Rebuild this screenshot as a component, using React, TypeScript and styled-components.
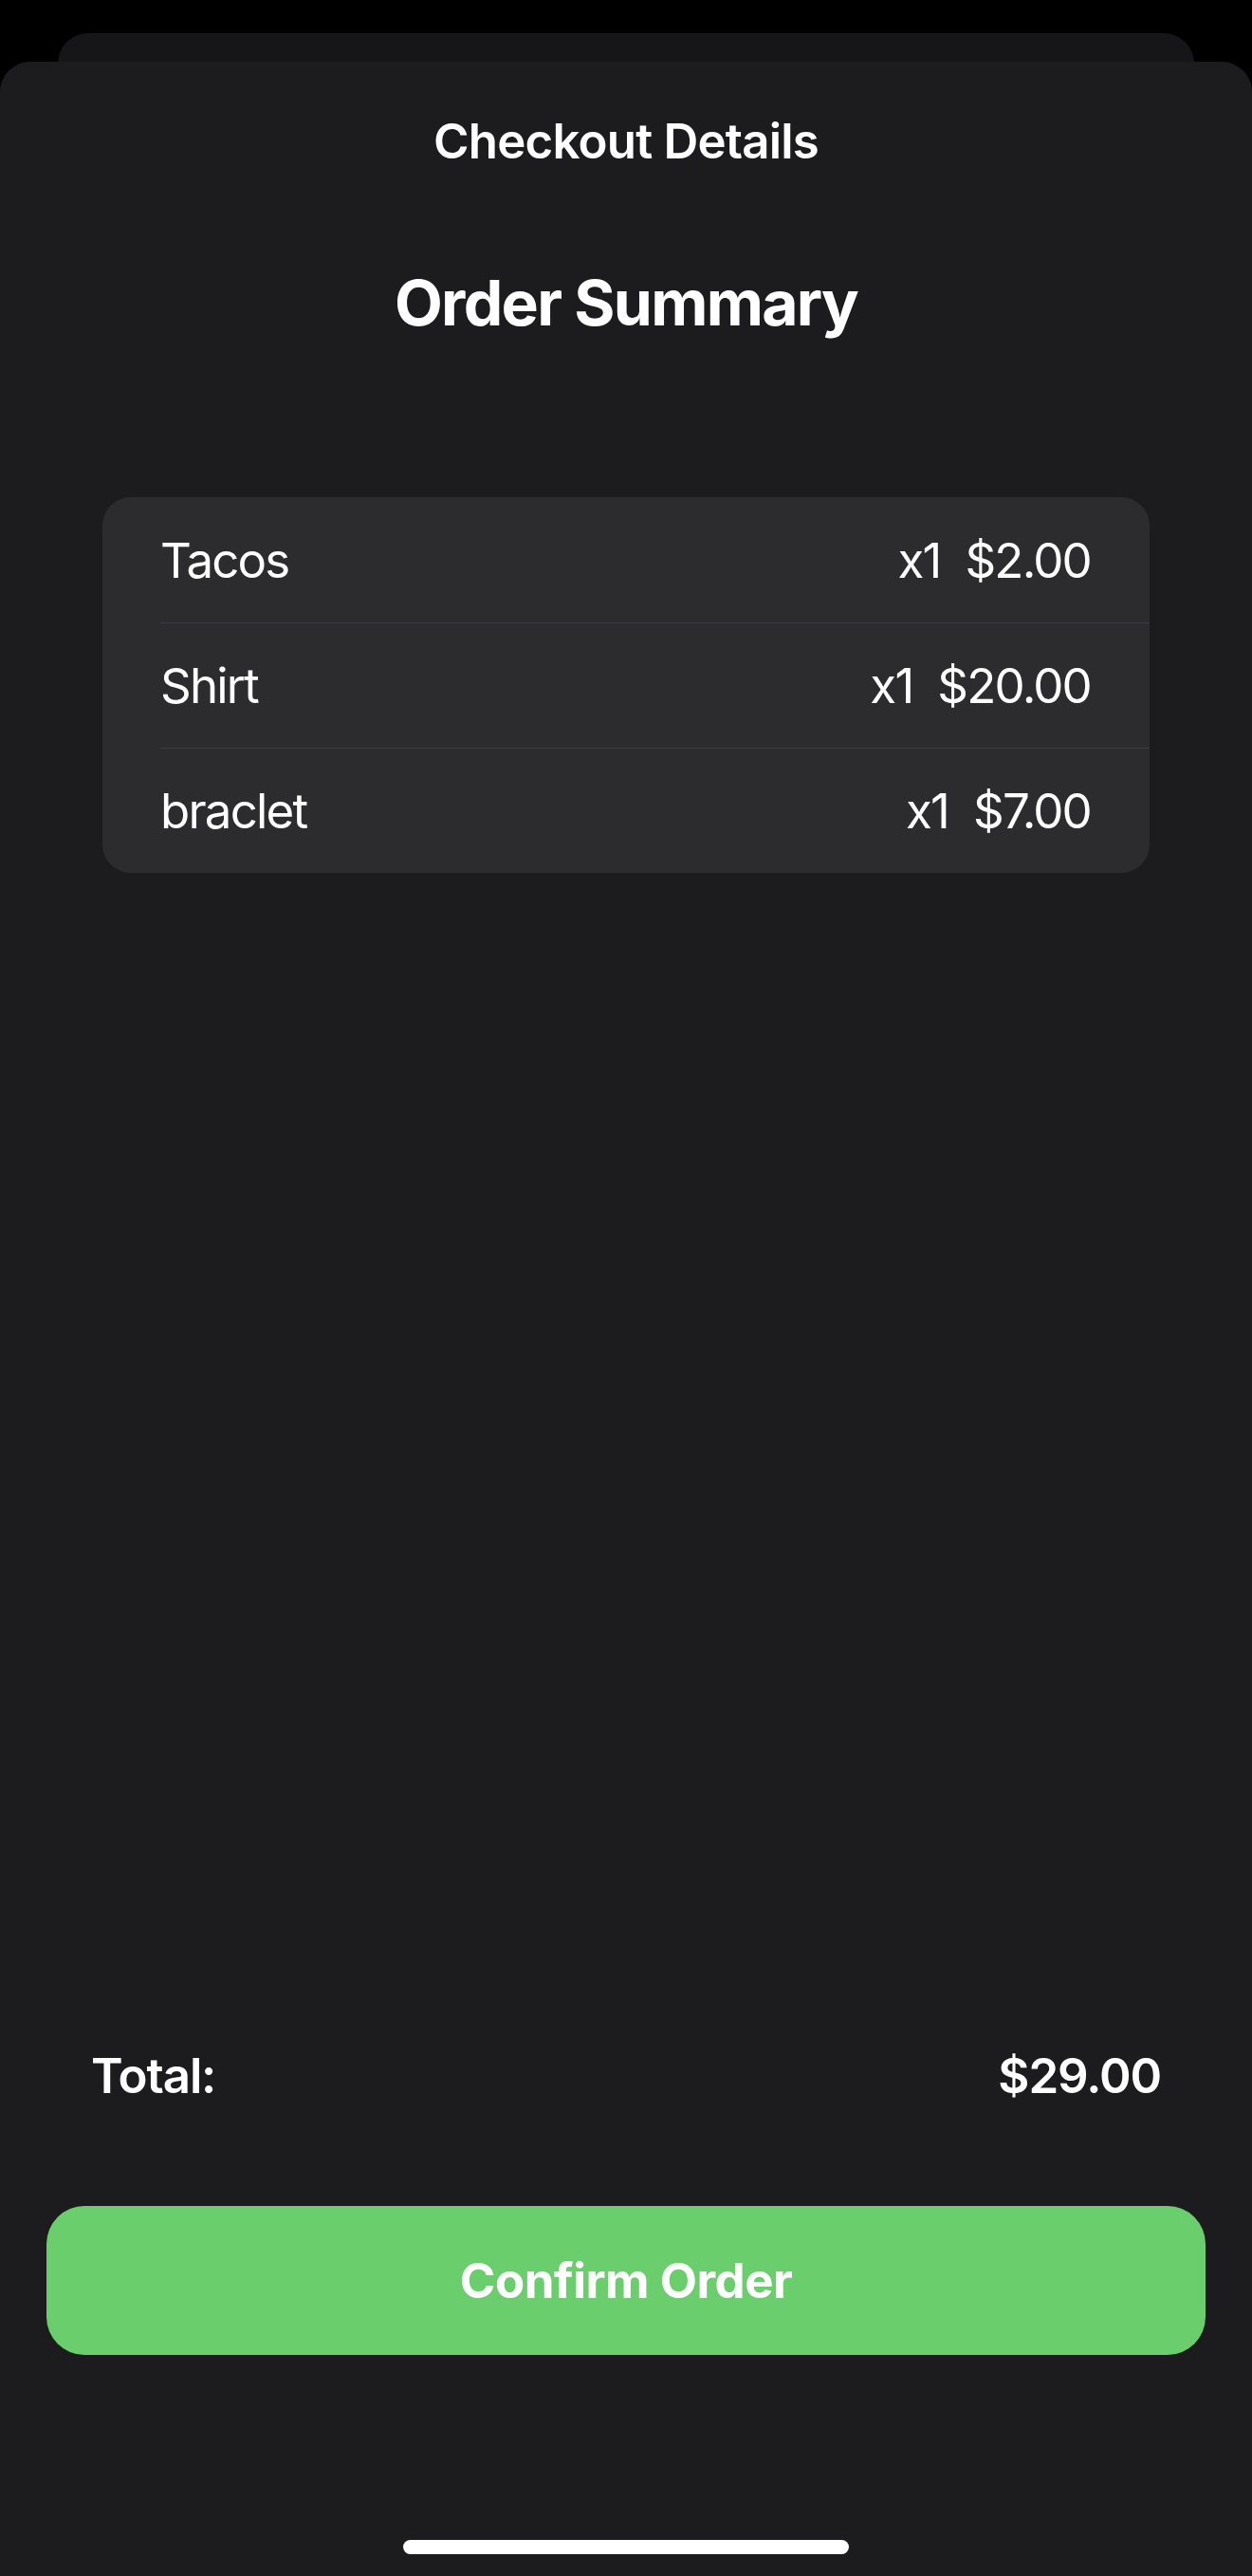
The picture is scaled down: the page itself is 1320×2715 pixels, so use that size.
import { createGlobalStyle } from "styled-components";
import styled from "styled-components";

type OrderItem = {
  name: string;
  qty: number;
  price: number;
};

const items: OrderItem[] = [
  { name: "Tacos", qty: 1, price: 2 },
  { name: "Shirt", qty: 1, price: 20 },
  { name: "braclet", qty: 1, price: 7 },
];

const money = (n: number) => `$${n.toFixed(2)}`;

const GlobalStyle = createGlobalStyle`
  html, body {
    margin: 0;
    padding: 0;
    background: #000;
  }
  body {
    font-family: Inter, "Noto Sans", "Liberation Sans", sans-serif;
    color: #fff;
    -webkit-font-smoothing: antialiased;
  }
  * {
    box-sizing: border-box;
  }
`;

const Screen = styled.div`
  width: 1320px;
  height: 2715px;
  padding-top: 35px;
  background: #000;
  display: flex;
  flex-direction: column;
  overflow: hidden;
`;

const BackSheet = styled.div`
  height: 60px;
  margin: 0 61px;
  border-radius: 32px 32px 0 0;
  background: #161618;
`;

const Sheet = styled.div`
  position: relative;
  flex: 1;
  margin-top: -30px;
  border-radius: 32px 32px 0 0;
  background: #1c1c1e;
  display: flex;
  flex-direction: column;
  padding-top: 53px;
  padding-bottom: 23px;
`;

const NavTitle = styled.h1`
  margin: 0;
  font-size: 51px;
  line-height: 1.2;
  font-weight: 600;
  letter-spacing: -0.8px;
  text-align: center;
`;

const Heading = styled.h2`
  margin: 101px 0 0;
  font-size: 66px;
  line-height: 1.2;
  font-weight: 700;
  letter-spacing: -1.7px;
  text-align: center;
`;

const ItemList = styled.div`
  margin: 165px 108px 0;
  border-radius: 30px;
  background: #2c2c2e;
  overflow: hidden;
`;

const ItemRow = styled.div<{ $first?: boolean }>`
  height: 132px;
  margin-left: 61px;
  padding-right: 62px;
  display: flex;
  align-items: center;
  justify-content: space-between;
  border-top: ${(p) => (p.$first ? "none" : "1.5px solid #3d3d41")};
  font-size: 51px;
  line-height: 1.2;
  font-weight: 400;
  letter-spacing: -1.8px;
`;

const ItemMeta = styled.div`
  display: flex;
  gap: 26px;
`;

const Spacer = styled.div`
  flex: 1;
`;

const TotalRow = styled.div`
  display: flex;
  justify-content: space-between;
  padding: 0 96px;
  font-size: 51px;
  line-height: 1.2;
  font-weight: 600;
  letter-spacing: -1.1px;
`;

const ConfirmButton = styled.button`
  margin: 107px 49px 0;
  height: 157px;
  border: none;
  border-radius: 40px;
  background: #69ce6b;
  color: #fff;
  font-family: inherit;
  font-size: 51px;
  line-height: 1.2;
  font-weight: 700;
  letter-spacing: -0.5px;
  cursor: pointer;
`;

const HomeIndicator = styled.div`
  align-self: center;
  margin-top: 195px;
  width: 470px;
  height: 15px;
  border-radius: 8px;
  background: #fff;
`;

export default function App() {
  const total = items.reduce((sum, it) => sum + it.qty * it.price, 0);

  return (
    <>
      <GlobalStyle />
      <Screen>
        <BackSheet />
        <Sheet>
          <NavTitle>Checkout Details</NavTitle>
          <Heading>Order Summary</Heading>
          <ItemList>
            {items.map((it, i) => (
              <ItemRow key={it.name} $first={i === 0}>
                <span>{it.name}</span>
                <ItemMeta>
                  <span>x{it.qty}</span>
                  <span>{money(it.price * it.qty)}</span>
                </ItemMeta>
              </ItemRow>
            ))}
          </ItemList>
          <Spacer />
          <TotalRow>
            <span>Total:</span>
            <span>{money(total)}</span>
          </TotalRow>
          <ConfirmButton>Confirm Order</ConfirmButton>
          <HomeIndicator />
        </Sheet>
      </Screen>
    </>
  );
}
